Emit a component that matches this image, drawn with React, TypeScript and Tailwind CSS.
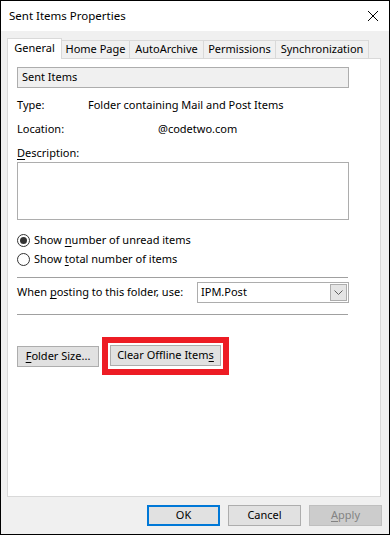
import React from 'react'

const font = { fontFamily: '"Noto Sans", "Open Sans", sans-serif' }

function U({ children }: { children: React.ReactNode }) {
  return <span className="underline underline-offset-[2px] decoration-[1px]">{children}</span>
}

function Radio({ checked }: { checked?: boolean }) {
  return (
    <span className="flex h-[13px] w-[13px] items-center justify-center rounded-full border border-[#333333] bg-white">
      {checked && <span className="h-[7px] w-[7px] rounded-full bg-[#333333]" />}
    </span>
  )
}

const tabs = [
  { name: 'Home Page', w: 'w-[68px]' },
  { name: 'AutoArchive', w: 'w-[74px]' },
  { name: 'Permissions', w: 'w-[72px]' },
  { name: 'Synchronization', w: 'w-[93px]' },
]

export default function App() {
  return (
    <div
      className="flex h-[535px] w-[390px] flex-col border border-black bg-[#f0f0f0] text-[11px] text-black"
      style={font}
    >
      {/* Title bar */}
      <div className="flex h-[30px] shrink-0 items-center justify-between bg-white pl-[8px] pr-[9px]">
        <span className="text-[11.5px] leading-none">Sent Items Properties</span>
        <svg width="12" height="12" viewBox="0 0 12 12" className="mr-[1px]">
          <path d="M1 1 L11 11 M11 1 L1 11" stroke="#000" strokeWidth="1" />
        </svg>
      </div>

      {/* Tabs */}
      <div className="ml-[6px] mt-[7px] flex h-[20px] items-end">
        <div className="relative z-10 -mb-px flex h-[21px] w-[55px] items-center justify-center border border-b-0 border-[#d9d9d9] bg-white pb-[2px]">
          General
        </div>
        {tabs.map((t) => (
          <div
            key={t.name}
            className={`flex h-[18px] ${t.w} items-center justify-center whitespace-nowrap border border-b-0 border-l-0 border-[#d9d9d9] bg-[#f0f0f0]`}
          >
            {t.name}
          </div>
        ))}
      </div>

      {/* Panel */}
      <div className="ml-[6px] flex h-[439px] w-[374px] flex-col border border-[#d9d9d9] bg-white pl-[9px] pt-[8px]">
        <div className="flex h-[21px] w-[332px] items-center border border-[#adadad] bg-[#f0f0f0] pl-[4px]">
          Sent Items
        </div>

        <div className="mt-[9px] flex h-[16px] items-center">
          <span className="w-[71px]">Type:</span>
          <span>Folder containing Mail and Post Items</span>
        </div>
        <div className="mt-[8px] flex h-[16px] items-center">
          <span className="w-[141px]">Location:</span>
          <span>@codetwo.com</span>
        </div>
        <div className="mt-[8px] flex h-[16px] items-center">
          <span>
            <U>D</U>escription:
          </span>
        </div>
        <div className="mt-[1px] h-[58px] w-[332px] border border-[#adadad] bg-white" />

        <div className="mt-[12px] flex h-[16px] items-center gap-[4px]">
          <Radio checked />
          <span>
            Show <U>n</U>umber of unread items
          </span>
        </div>
        <div className="mt-[3px] flex h-[16px] items-center gap-[4px]">
          <Radio />
          <span>
            Show <U>t</U>otal number of items
          </span>
        </div>

        <div className="mt-[10px] h-px w-[331px] bg-[#a0a0a0]" />

        <div className="mt-[4px] flex h-[21px] w-[332px] items-center">
          <span className="w-[180px] whitespace-nowrap">
            When <U>p</U>osting to this folder, use:
          </span>
          <div className="flex h-[21px] flex-1 items-center justify-between border border-[#adadad] bg-white pl-[3px] pr-[1px]">
            <span>IPM.Post</span>
            <span className="flex h-[17px] w-[17px] items-center justify-center border border-[#adadad] bg-[#e5e5e5]">
              <svg width="9" height="5" viewBox="0 0 9 5">
                <path d="M0.5 0.5 L4.5 4.5 L8.5 0.5" stroke="#606060" fill="none" strokeWidth="1" />
              </svg>
            </span>
          </div>
        </div>

        <div className="mt-[11px] h-px w-[331px] bg-[#a0a0a0]" />

        <div className="mt-[22px] flex items-center">
          <button className="h-[21px] w-[82px] border border-[#adadad] bg-[#e1e1e1] text-center">
            <U>F</U>older Size...
          </button>
          <div className="ml-[3px] border-[6px] border-[#ed1c24] p-[2px] pb-[3px]">
            <button className="h-[21px] w-[111px] border border-[#adadad] bg-[#e1e1e1] text-center">
              Clear Offline Item<U>s</U>
            </button>
          </div>
        </div>
      </div>

      {/* Bottom buttons */}
      <div className="mt-[8px] flex justify-end gap-[8px] pr-[7px]">
        <button className="h-[21px] w-[73px] border-2 border-[#0078d7] bg-[#e1e1e1]">OK</button>
        <button className="h-[21px] w-[73px] border border-[#adadad] bg-[#e1e1e1]">Cancel</button>
        <button className="h-[21px] w-[73px] border border-[#bfbfbf] bg-[#cccccc] text-[#838383]">
          <U>A</U>pply
        </button>
      </div>
    </div>
  )
}
